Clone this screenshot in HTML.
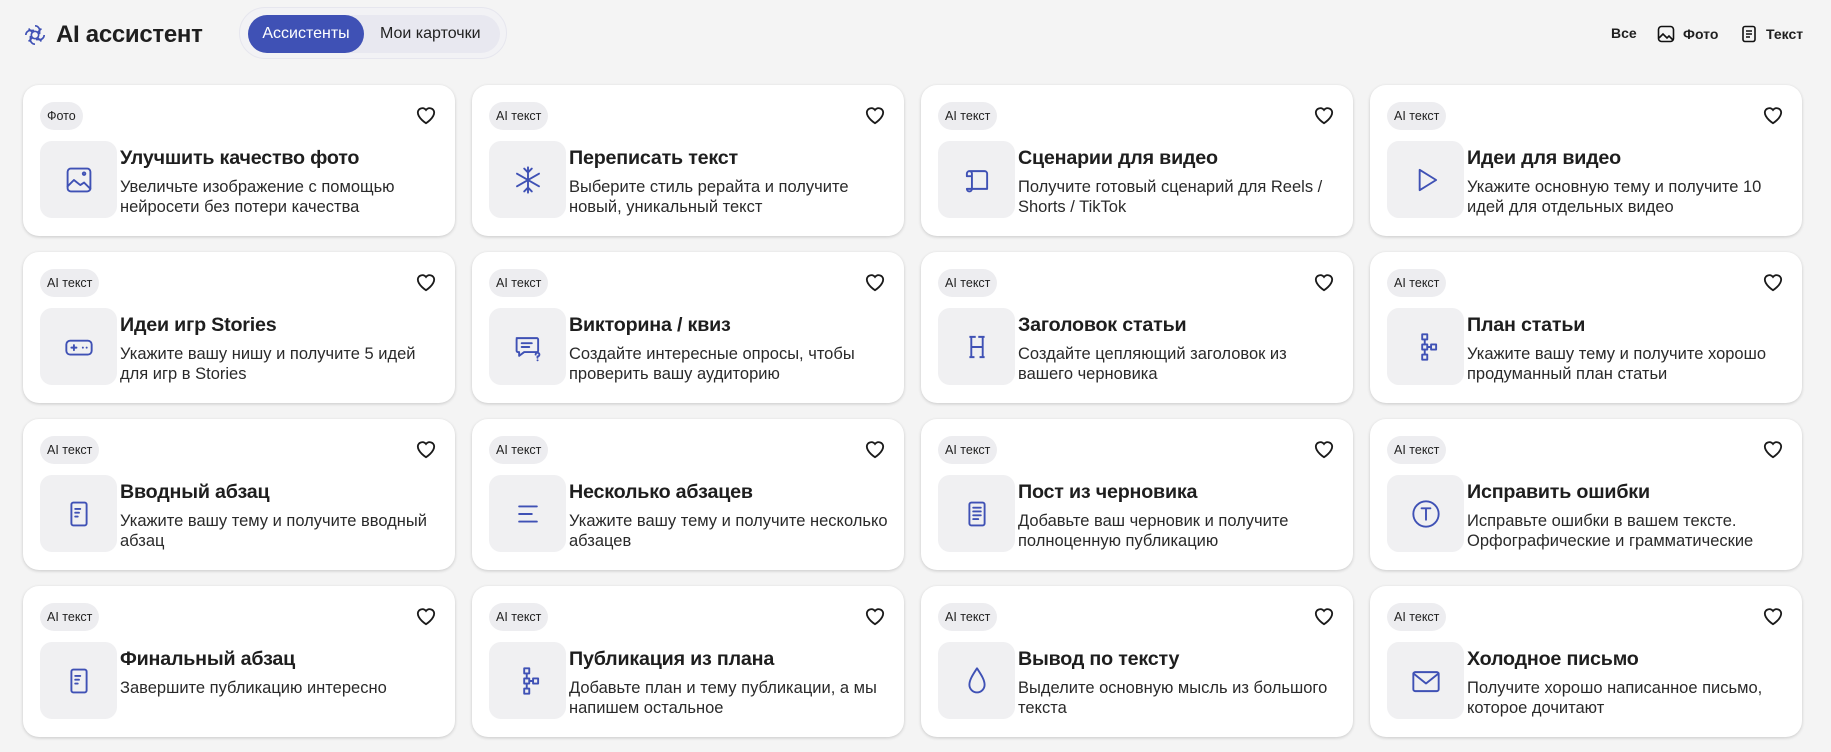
<!DOCTYPE html>
<html><head><meta charset="utf-8"><style>
*{box-sizing:border-box;margin:0;padding:0}
body{width:1831px;height:752px;background:#f4f4f4;font-family:"Liberation Sans",sans-serif;color:#1f1f1f;position:relative;overflow:hidden}
.logo{position:absolute;left:24px;top:21px;display:flex;align-items:center}
.logo span{font-size:24px;font-weight:bold;margin-left:10px;letter-spacing:-0.3px}
.tabs{position:absolute;left:239px;top:7px;width:268px;height:52px;border:1px solid #e6e6ee;border-radius:26px;background:#f2f2f5}
.tabs .in{position:absolute;left:8px;top:7px;width:252px;height:38px;border-radius:19px;background:#e8e8f0}
.tabs .a{position:absolute;left:0;top:0;width:116px;height:38px;border-radius:19px;background:#3f51b5;color:#fff;font-size:16px;line-height:38px;text-align:center}
.tabs .b{position:absolute;left:132px;top:0;font-size:16px;line-height:38px;color:#222}
.filt{position:absolute;top:25px;font-size:14px;font-weight:bold;display:flex;align-items:center;gap:8px}
.card{position:absolute;width:432px;height:151px;background:#fff;border-radius:16px;box-shadow:0 1px 3px rgba(0,0,0,.18)}
.tag{position:absolute;left:17px;top:17px;height:28px;padding:0 7px;border-radius:14px;background:#ededf0;font-size:12.5px;line-height:28px;color:#222}
.heart{position:absolute;right:18px;top:20px}
.ib{position:absolute;left:17px;top:56px;width:77px;height:77px;border-radius:12px;background:#f0f0f2;display:flex;align-items:center;justify-content:center}
.t{position:absolute;left:97px;top:62px;font-size:19.7px;font-weight:bold;letter-spacing:-0.2px;color:#1e1e1e}
.d{position:absolute;left:97px;top:92px;width:322px;font-size:16.5px;line-height:20px;color:#2a2a2a}
svg.i{width:38px;height:38px;fill:none;stroke:#3f51b5;stroke-width:1.5;stroke-linecap:round;stroke-linejoin:round}
</style></head><body>
<div class="logo"><svg width="22" height="22" viewBox="0 0 24 24" fill="none" stroke="#3f51b5" stroke-width="1.8"><circle cx="12" cy="12" r="4"/><path d="M12 2a5 5 0 0 1 5 5v4M22 12a5 5 0 0 1-5 5h-4M12 22a5 5 0 0 1-5-5v-4M2 12a5 5 0 0 1 5-5h4M5 5l4 4M19 19l-4-4M19 5l-4 4M5 19l4-4"/></svg><span>AI ассистент</span></div>
<div class="tabs"><div class="in"><div class="a">Ассистенты</div><div class="b">Мои карточки</div></div></div>
<div class="filt" style="left:1611px">Все</div>
<div class="filt" style="left:1657px"><svg width="18" height="18" viewBox="0 0 18 18" fill="none" stroke="#111" stroke-width="1.6"><rect x="1.5" y="1.5" width="15" height="15" rx="3"/><path d="M2 13l4-4 4 4 2-2 4 4"/></svg>Фото</div>
<div class="filt" style="left:1740px"><svg width="18" height="18" viewBox="0 0 18 18" fill="none" stroke="#111" stroke-width="1.6"><rect x="3" y="1.5" width="12" height="15" rx="2"/><path d="M6 6h6M6 9h6M6 12h4"/></svg>Текст</div>
<div id="g"></div>
<script>
const H='<svg width="22" height="20" viewBox="0 0 24 22" fill="none" stroke="#1a1a1a" stroke-width="2"><path d="M12 20s-9-5.5-9-12a5 5 0 0 1 9-2.5A5 5 0 0 1 21 8c0 6.5-9 12-9 12z"/></svg>';
const I={
img:'<rect x="6" y="6" width="18" height="18" rx="2.5"/><path d="M6 20l5-5 5 4 3-2 5 5"/><circle cx="19" cy="10" r="1"/>',
snow:'<path d="M15 5v20M6.3 10l17.4 10M6.3 20l17.4-10M12 6l3 3 3-3M12 24l3-3 3 3"/>',
scroll:'<path d="M9 8h12a2 2 0 0 1 2 2v12H11M9 8a2 2 0 0 0-2 2v2h4M9 8a2 2 0 0 1 2 2v12a2 2 0 0 1-4 0h4"/>',
play:'<path d="M10 7l13 8-13 8z"/>',
game:'<rect x="5" y="10" width="20" height="11" rx="3"/><path d="M9 15.5h4M11 13.5v4M18 15.5h.1M21 15.5h.1"/>',
quiz:'<path d="M6 8h16a1 1 0 0 1 1 1v9a1 1 0 0 1-1 1H12l-4 3v-3H7a1 1 0 0 1-1-1V9a1 1 0 0 1 1-1zM10 12h8M10 15h6"/><path d="M21 21a1.5 1.5 0 1 1 1.5 1.5v1M22.5 25.5h.1"/>',
head:'<path d="M9 7h5M16 7h5M10.5 7v16M19.5 7v16M10.5 15h9M9 23h4M17 23h4" stroke-linecap="butt"/>',
tree:'<rect x="12" y="5" width="4" height="4"/><rect x="12" y="13" width="4" height="4"/><rect x="12" y="21" width="4" height="4"/><rect x="19" y="13" width="4" height="4"/><path d="M14 9v4M14 17v4M16 15h3"/>',
doc1:'<rect x="9" y="6" width="12" height="18" rx="1.5"/><path d="M12 11h4M12 14h3M12 17h2"/>',
lines:'<path d="M8 9h14M8 15h10M8 21h14"/>',
doc2:'<rect x="9" y="6" width="12" height="18" rx="1.5"/><path d="M12 10h6M12 13h6M12 16h6M12 19h4"/>',
circT:'<circle cx="15" cy="15" r="10"/><path d="M11.5 10.5h7M15 10.5v9"/>',
drop:'<path d="M15 5c-4 6-6 9.5-6 13a6 6 0 0 0 12 0c0-3.5-2-7-6-13z"/>',
mail:'<rect x="5" y="8" width="20" height="15" rx="1.5"/><path d="M5 9l10 8 10-8"/>'};
const C=[
['Фото','img','Улучшить качество фото','Увеличьте изображение с помощью нейросети без потери качества'],
['AI текст','snow','Переписать текст','Выберите стиль рерайта и получите новый, уникальный текст'],
['AI текст','scroll','Сценарии для видео','Получите готовый сценарий для Reels / Shorts / TikTok'],
['AI текст','play','Идеи для видео','Укажите основную тему и получите 10 идей для отдельных видео'],
['AI текст','game','Идеи игр Stories','Укажите вашу нишу и получите 5 идей для игр в Stories'],
['AI текст','quiz','Викторина / квиз','Создайте интересные опросы, чтобы проверить вашу аудиторию'],
['AI текст','head','Заголовок статьи','Создайте цепляющий заголовок из вашего черновика'],
['AI текст','tree','План статьи','Укажите вашу тему и получите хорошо продуманный план статьи'],
['AI текст','doc1','Вводный абзац','Укажите вашу тему и получите вводный абзац'],
['AI текст','lines','Несколько абзацев','Укажите вашу тему и получите несколько абзацев'],
['AI текст','doc2','Пост из черновика','Добавьте ваш черновик и получите полноценную публикацию'],
['AI текст','circT','Исправить ошибки','Исправьте ошибки в вашем тексте. Орфографические и грамматические'],
['AI текст','doc1','Финальный абзац','Завершите публикацию интересно'],
['AI текст','tree','Публикация из плана','Добавьте план и тему публикации, а мы напишем остальное'],
['AI текст','drop','Вывод по тексту','Выделите основную мысль из большого текста'],
['AI текст','mail','Холодное письмо','Получите хорошо написанное письмо, которое дочитают']];
let h='';C.forEach((c,k)=>{const x=23+(k%4)*449,y=85+Math.floor(k/4)*167;
h+=`<div class="card" style="left:${x}px;top:${y}px"><div class="tag">${c[0]}</div><div class="heart">${H}</div><div class="ib"><svg class="i" viewBox="0 0 30 30">${I[c[1]]}</svg></div><div class="t">${c[2]}</div><div class="d">${c[3]}</div></div>`});
document.getElementById('g').innerHTML=h;
</script>
</body></html>
